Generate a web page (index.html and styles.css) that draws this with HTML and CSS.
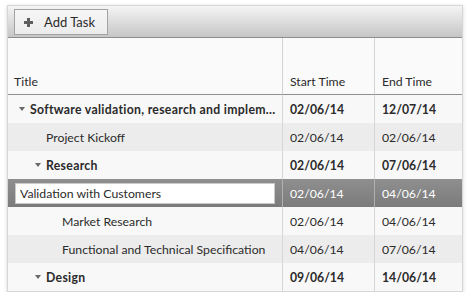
FILE: index.html
```html
<!DOCTYPE html>
<html>
<head>
<meta charset="utf-8">
<link rel="stylesheet" href="styles.css">
</head>
<body>
<div class="gantt">
  <div class="toolbar">
    <button class="btn" type="button">
      <svg class="plus" width="9" height="9" viewBox="0 0 9 9"><path d="M3 0h3v3h3v3H6v3H3V6H0V3h3z" fill="#5e5e5e"/></svg>
      <span>Add Task</span>
    </button>
  </div>
  <div class="grid">
    <div class="hcell c-title">Title</div>
    <div class="hcell c-date">Start Time</div>
    <div class="hcell c-date">End Time</div>

    <div class="row alt0 bold">
      <div class="cell c-title"><span class="tog open"></span><span class="txt">Software validation, research and implem…</span></div>
      <div class="cell c-date">02/06/14</div>
      <div class="cell c-date">12/07/14</div>
    </div>
    <div class="row alt1">
      <div class="cell c-title"><span class="ind"></span><span class="tog"></span><span class="txt">Project Kickoff</span></div>
      <div class="cell c-date">02/06/14</div>
      <div class="cell c-date">02/06/14</div>
    </div>
    <div class="row alt0 bold">
      <div class="cell c-title"><span class="ind"></span><span class="tog open"></span><span class="txt">Research</span></div>
      <div class="cell c-date">02/06/14</div>
      <div class="cell c-date">07/06/14</div>
    </div>
    <div class="row sel">
      <div class="cell c-title edit"><input class="editor" type="text" value="Validation with Customers"></div>
      <div class="cell c-date">02/06/14</div>
      <div class="cell c-date">04/06/14</div>
    </div>
    <div class="row alt0">
      <div class="cell c-title"><span class="ind"></span><span class="ind"></span><span class="tog"></span><span class="txt">Market Research</span></div>
      <div class="cell c-date">02/06/14</div>
      <div class="cell c-date">04/06/14</div>
    </div>
    <div class="row alt1">
      <div class="cell c-title"><span class="ind"></span><span class="ind"></span><span class="tog"></span><span class="txt">Functional and Technical Specification</span></div>
      <div class="cell c-date">04/06/14</div>
      <div class="cell c-date">07/06/14</div>
    </div>
    <div class="row alt0 bold">
      <div class="cell c-title"><span class="ind"></span><span class="tog open"></span><span class="txt">Design</span></div>
      <div class="cell c-date">09/06/14</div>
      <div class="cell c-date">14/06/14</div>
    </div>
  </div>
</div>
</body>
</html>
```
FILE: styles.css
```css
html, body {
  margin: 0;
  padding: 0;
  background: #ffffff;
}
body {
  font-family: Lato, "Open Sans", sans-serif;
  font-size: 12.25px;
  color: #2b2b2b;
}
.gantt {
  box-sizing: border-box;
  margin: 5px 0 0 7px;
  width: 456px;
  height: 287px;
  border: 1px solid #d6d6d6;
  box-shadow: 0 1px 4px rgba(0, 0, 0, 0.16);
  background: #f8f8f8;
  overflow: hidden;
}
.toolbar {
  height: 32px;
  box-sizing: border-box;
  padding: 3px 0 0 6px;
  background: linear-gradient(#f4f4f4, #c6c6c6);
  border-bottom: 1px solid #8e8e8e;
}
.btn {
  display: flex;
  align-items: center;
  box-sizing: border-box;
  width: 94px;
  height: 26px;
  margin: 0;
  padding: 0 0 0 9px;
  border: 1px solid #a3a3a3;
  background: linear-gradient(#f6f6f6, #ececec);
  font-family: inherit;
  font-size: 13px;
  color: #2b2b2b;
}
.plus {
  display: block;
  margin-right: 11px;
}
.grid {
  display: grid;
  grid-template-columns: 274px 92px 88px;
}
.hcell {
  height: 57px;
  box-sizing: border-box;
  display: flex;
  align-items: flex-end;
  padding-bottom: 5px;
  background: #fafafa;
  border-bottom: 1px solid #8e8e8e;
}
.hcell.c-title {
  padding-left: 6px;
}
.hcell.c-date {
  border-left: 1px solid #d4d4d4;
  padding-left: 7px;
}
.row {
  display: contents;
}
.cell {
  height: 28px;
  box-sizing: border-box;
  display: flex;
  align-items: center;
  white-space: nowrap;
  overflow: hidden;
}
.cell.c-title {
  padding-left: 6px;
}
.cell.c-date {
  border-left: 1px solid #d6d6d6;
  padding-left: 7px;
}
.alt0 .cell {
  background: #f8f8f8;
}
.alt1 .cell {
  background: #ececec;
}
.bold .cell {
  font-weight: bold;
}
.bold .txt {
  letter-spacing: 0.3px;
}
.sel .cell {
  background: linear-gradient(#8f8f8f, #7b7b7b);
  color: #ffffff;
}
.sel .cell.c-date {
  border-left-color: #b0b0b0;
}
.ind, .tog {
  flex: none;
  width: 16px;
  height: 16px;
  position: relative;
}
.tog.open::before {
  content: "";
  position: absolute;
  left: 5px;
  top: 6px;
  border-left: 3.5px solid transparent;
  border-right: 3.5px solid transparent;
  border-top: 4px solid #6a6a6a;
}
.txt {
  overflow: hidden;
}
.cell.edit {
  padding-left: 7px;
}
.editor {
  box-sizing: border-box;
  width: 260px;
  height: 21px;
  margin: 0;
  padding: 0 0 0 4px;
  border: 1px solid #c9c9c9;
  background: #ffffff;
  font-family: inherit;
  font-size: 12.25px;
  color: #2b2b2b;
  outline: none;
}
```
